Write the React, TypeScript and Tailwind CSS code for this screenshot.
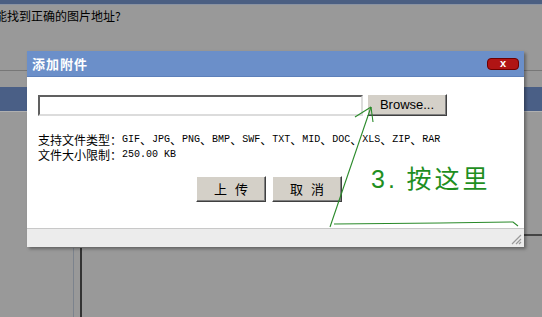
const cjk = "font-['SimSun','Noto_Sans_CJK_SC',sans-serif]";

function Mono({ children }: { children: React.ReactNode }) {
  return <span className="font-['Liberation_Mono',monospace] text-[10px] leading-[15px]">{children}</span>;
}

function WinButton({ left, right }: { left: string; right: string }) {
  return (
    <button className="flex h-[26px] w-[70px] items-center justify-center gap-[8px] border border-t-white border-l-white border-b-[#404040] border-r-[#404040] bg-[#d4d0c8] text-[13px] text-black shadow-[inset_-1px_-1px_0_#808080]">
      <span>{left}</span>
      <span>{right}</span>
    </button>
  );
}

export default function App() {
  const types = ["GIF", "JPG", "PNG", "BMP", "SWF", "TXT", "MID", "DOC", "XLS", "ZIP", "RAR"];

  return (
    <div className={`relative h-[317px] w-[542px] overflow-hidden bg-[#999999] ${cjk}`}>
      {/* page behind the dialog */}
      <div className="h-[4px] bg-[#4b5f82]" />
      <div className="h-[1px] bg-[#8a93a3]" />
      <div className="ml-[-5px] mt-[3px] h-[16px] text-[12px] leading-[16px] text-black">能找到正确的图片地址?</div>
      <div className="mt-[46px] h-[1px] bg-[#777777]" />
      <div className="mt-[16px] h-[24px] bg-[#4a5f86]" />
      <div className="h-[1px] bg-[#b0b0b0]" />
      <div className="ml-[82px] mt-[122px] h-[2px] bg-[#444444]" />
      <div className="ml-[73px] mt-[12px] flex h-[80px] gap-[6px]">
        <div className="w-[1px] bg-[#7c838d]" />
        <div className="w-[2px] bg-[#333333]" />
      </div>

      {/* dialog */}
      <div className="absolute left-[27px] top-[51px] flex h-[196px] w-[497px] flex-col bg-white shadow-[2px_2px_3px_rgba(0,0,0,0.35)]">
        <div className="flex h-[26px] items-center justify-between border-b border-[#5d80ba] bg-[#6b8fc9] pl-[5px] pr-[5px]">
          <span className="text-[13px] font-bold tracking-[1px] text-white">添加附件</span>
          <span className="flex h-[12px] w-[32px] items-center justify-center rounded-[4px] border border-[#6e0000] bg-[#b01414] font-['Liberation_Sans',sans-serif] text-[11px] font-bold leading-none text-white">
            x
          </span>
        </div>

        <div className="flex flex-1 flex-col px-[11px] pt-[17px]">
          <div className="flex items-center gap-[4px]">
            <div className="h-[21px] w-[325px] border-2 border-t-[#606060] border-l-[#606060] border-b-[#dcdcdc] border-r-[#dcdcdc] bg-white" />
            <button className="h-[22px] w-[80px] border border-t-white border-l-white border-b-[#404040] border-r-[#404040] bg-[#d4d0c8] font-['Liberation_Sans',sans-serif] text-[13px] text-black shadow-[inset_-1px_-1px_0_#808080]">
              Browse...
            </button>
          </div>

          <div className="mt-[16px] text-[12px] leading-[15px] text-black">
            <div className="flex h-[15px] items-center whitespace-nowrap">
              <span>支持文件类型：</span>
              {types.map((t, i) => (
                <span key={t} className="flex items-center">
                  <Mono>{t}</Mono>
                  {i < types.length - 1 ? <span>、</span> : null}
                </span>
              ))}
            </div>
            <div className="flex h-[15px] items-center whitespace-nowrap">
              <span>文件大小限制：</span>
              <Mono>250.00 KB</Mono>
            </div>
          </div>

          <div className="mt-[14px] flex gap-[6px] pl-[158px]">
            <WinButton left="上" right="传" />
            <WinButton left="取" right="消" />
          </div>
        </div>

        <div className="flex h-[19px] items-end justify-end border-t border-[#c8c8c8] bg-[#ececec] pb-[2px] pr-[2px]">
          <svg width="12" height="12" viewBox="0 0 12 12">
            <path d="M11 2 L2 11 M11 6 L6 11 M11 9 L9 11" stroke="#9a9a9a" strokeWidth="1.2" />
          </svg>
        </div>
      </div>

      {/* annotation */}
      <div className="absolute left-[371px] top-[160px] text-[25px] leading-[34px] tracking-[3px] text-[#1f8f1f]">
        <span className="font-['Liberation_Sans',sans-serif]">3.</span> 按这里
      </div>
      <svg className="absolute left-0 top-0" width="542" height="317" viewBox="0 0 542 317">
        <g fill="none" stroke="#2a8a2a" strokeWidth="1.1">
          <path d="M330 227 L371 107" />
          <path d="M371 107 L355 117" />
          <path d="M371 107 L373 122" />
          <path d="M334 224 L440 223 L513 222 L518 226" />
        </g>
      </svg>
    </div>
  );
}
